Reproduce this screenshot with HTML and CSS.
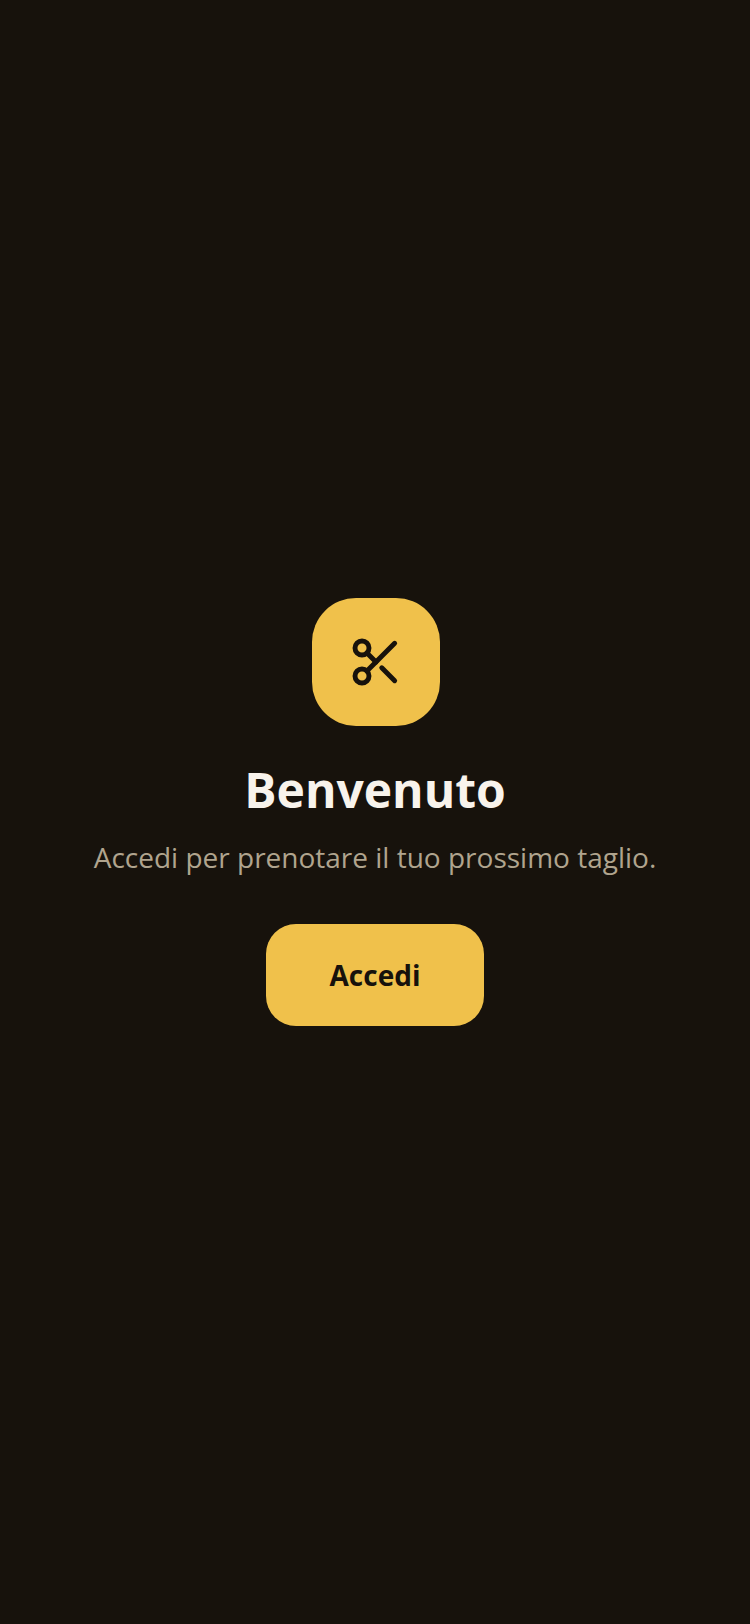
FILE: index.html
```html
<!DOCTYPE html>
<html>
<head>
  <meta charset="UTF-8" />
  <title>Benvenuto</title>
  <link rel="stylesheet" href="styles.css">
</head>
<body>

  <div class="logo">
    <svg width="56" height="56" viewBox="0 0 24 24" fill="none" stroke="#17120c" stroke-width="2.1" stroke-linecap="round" stroke-linejoin="round">
      <circle cx="6" cy="6" r="3"></circle>
      <circle cx="6" cy="18" r="3"></circle>
      <path d="M20 4 8.12 15.88"></path>
      <path d="M14.47 14.48 20 20"></path>
      <path d="M8.12 8.12 12 12"></path>
    </svg>
  </div>

  <h1>Benvenuto</h1>
  <p class="subtitle">Accedi per prenotare il tuo prossimo taglio.</p>

  <a class="login-btn" href="#">Accedi</a>

</body>
</html>
```

FILE: styles.css
```css
* {
  box-sizing: border-box;
}

body {
  margin: 0;
  height: 1624px;
  background: #17120c;
  color: #f8f3ec;
  font-family: "Open Sans", sans-serif;
  display: flex;
  flex-direction: column;
  align-items: center;
  justify-content: center;
  text-align: center;
}

.logo {
  width: 128px;
  height: 128px;
  margin-left: 2px;
  background: #f0c14b;
  border-radius: 44px;
  display: flex;
  align-items: center;
  justify-content: center;
  margin-bottom: 32px;
}

h1 {
  margin: 0 0 13px;
  font-size: 48px;
  line-height: 64px;
  font-weight: 700;
}

.subtitle {
  margin: 0 0 45px;
  font-size: 28px;
  line-height: 44px;
  color: #b0a48e;
}

.login-btn {
  width: 218px;
  height: 102px;
  background: #f0c14b;
  color: #17120c;
  border-radius: 30px;
  font-size: 28px;
  font-weight: 700;
  text-decoration: none;
  display: flex;
  align-items: center;
  justify-content: center;
}
```
